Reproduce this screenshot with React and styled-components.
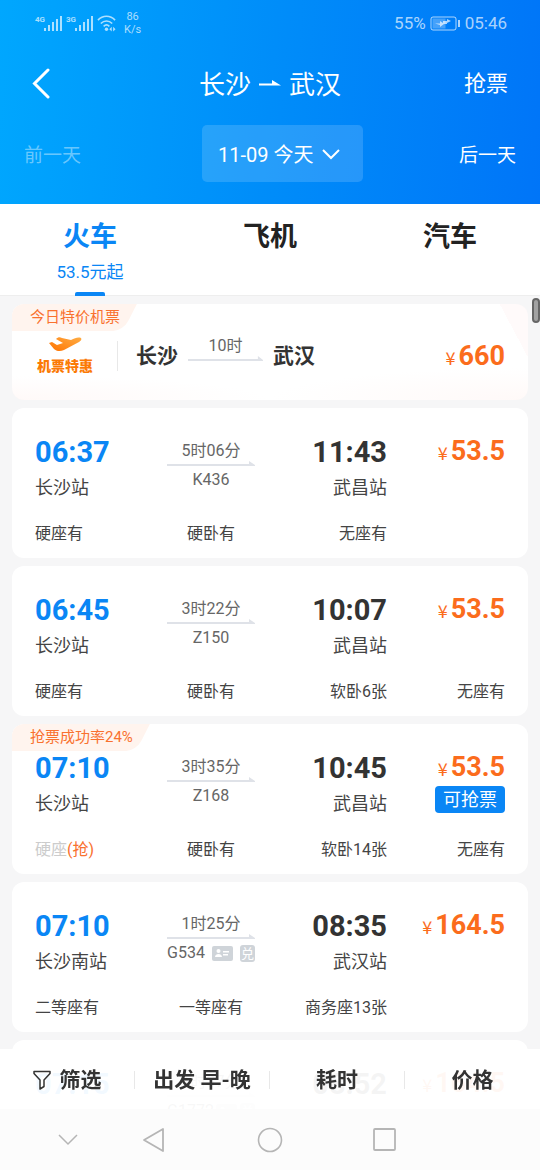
import React, { useState } from "react";
import styled, { createGlobalStyle, css } from "styled-components";

const GlobalStyle = createGlobalStyle`
  * {
    box-sizing: border-box;
  }

  body {
    margin: 0;
    background: #f6f6f7;
    color: #333;
    font-family: Roboto, "Noto Sans CJK SC", sans-serif;
    font-size: 16px;
  }

  button {
    border: 0;
    padding: 0;
    background: none;
    color: inherit;
    font: inherit;
    white-space: nowrap;
    cursor: pointer;
  }
`;

const Page = styled.div`
  height: 100vh;
  display: flex;
  flex-direction: column;
  overflow: hidden;
`;

const Header = styled.header`
  background: linear-gradient(95deg, #00a7fe 0%, #008df9 50%, #0075f8 100%);
  color: #fff;
`;

const StatusBar = styled.div`
  height: 46px;
  padding: 0 33px 0 35px;
  display: flex;
  align-items: center;
  justify-content: space-between;
  color: rgba(255, 255, 255, 0.68);
  font-size: 17px;
`;

const StatusGroup = styled.div`
  display: flex;
  align-items: center;
  gap: 4px;
`;

const Speed = styled.div`
  margin-left: 4px;
  font-size: 11px;
  line-height: 13px;
  text-align: center;
`;

const TitleRow = styled.div`
  height: 74px;
  padding: 0 32px;
  display: grid;
  grid-template-columns: 1fr auto 1fr;
  align-items: center;
`;

const BackButton = styled.button`
  justify-self: start;
  display: flex;
`;

const Title = styled.h1`
  margin: 0;
  padding-top: 3px;
  display: flex;
  align-items: center;
  gap: 8px;
  font-size: 26px;
  font-weight: 400;
  line-height: 36px;
`;

const GrabLink = styled.a`
  justify-self: end;
  padding-top: 2px;
  color: #fff;
  font-size: 22px;
  line-height: 30px;
  text-decoration: none;
`;

const DateRow = styled.div`
  padding: 5px 24px 22px;
  display: grid;
  grid-template-columns: 7fr auto 6fr;
  align-items: center;
`;

const DayButton = styled.button`
  justify-self: ${(props) => (props.$end ? "end" : "start")};
  font-size: 19px;

  &:disabled {
    color: rgba(255, 255, 255, 0.42);
  }
`;

const DateButton = styled.button`
  height: 57px;
  padding: 0 23px 0 16px;
  display: flex;
  align-items: center;
  gap: 9px;
  border-radius: 5px;
  background: rgba(255, 255, 255, 0.15);
  font-size: 20px;
`;

const Tabs = styled.nav`
  flex: none;
  height: 92px;
  display: grid;
  grid-template-columns: repeat(3, 1fr);
  background: #fff;
  border-bottom: 1px solid #eee;
`;

const Tab = styled.button`
  padding-top: 15px;
  display: flex;
  flex-direction: column;
  align-items: center;
  color: #222;

  ${(props) =>
    props.$active &&
    css`
      color: #0a86f5;
    `}
`;

const TabName = styled.span`
  font-size: 27px;
  font-weight: 700;
  line-height: 36px;
`;

const TabPrice = styled.span`
  margin-top: 5px;
  font-size: 17px;
  line-height: 24px;
`;

const TabLine = styled.span`
  width: 30px;
  height: 4px;
  margin-top: 8px;
  border-radius: 2px 2px 0 0;
  background: #0a86f5;
`;

const ListArea = styled.main`
  flex: 1;
  min-height: 0;
  position: relative;
`;

const List = styled.div`
  height: 100%;
  padding: 8px 12px 130px;
  display: flex;
  flex-direction: column;
  gap: 8px;
  overflow-y: auto;
  scrollbar-width: none;
`;

const ScrollThumb = styled.div`
  position: absolute;
  top: 2px;
  right: 0;
  width: 8px;
  height: 25px;
  border: 2px solid #666;
  border-radius: 4px;
  background: #a2a2a2;
`;

const Card = styled.section`
  flex: none;
  position: relative;
  overflow: hidden;
  border-radius: 12px;
  background: #fff;
`;

const Ribbon = styled.div`
  position: absolute;
  top: 0;
  left: 0;
  padding: 0 17px 0 18px;
  color: #f9712f;
  font-size: 15px;
  line-height: 27px;
  z-index: 0;

  &:before {
    content: "";
    position: absolute;
    inset: 0 7px 0 -20px;
    z-index: -1;
    border-radius: 0 0 10px 0;
    background: #fff4ee;
    transform: skewX(-27deg);
  }
`;

const FlightCard = styled(Card)`
  height: 96px;
  padding: 8px 23px 0 25px;
  display: flex;
  align-items: center;
  background:
    linear-gradient(62deg, transparent 95%, #fffafa 95%),
    radial-gradient(ellipse 50% 24px at 0% 100%, #fff9f8, transparent),
    radial-gradient(ellipse 50% 32px at 100% 100%, #fff9f8, transparent),
    #fff;
`;

const FlightLogo = styled.div`
  padding-right: 24px;
  display: flex;
  flex-direction: column;
  align-items: center;
  gap: 3px;
  color: #fb7a05;
  font-size: 14px;
  font-weight: 900;
  line-height: 20px;
`;

const Divider = styled.span`
  width: 1px;
  height: ${(props) => props.$height}px;
  background: #e8e8e8;
`;

const City = styled.strong`
  font-size: 21px;
  font-weight: 700;
  line-height: 30px;
`;

const FlightTime = styled.div`
  width: 75px;
  margin: 0 10px;
  padding-bottom: 15px;
  color: #666;
  font-size: 16px;
  line-height: 20px;
  text-align: center;
`;

const FlightRoute = styled.div`
  flex: 1;
  padding-left: 18px;
  display: flex;
  align-items: center;
`;

const Price = styled.div`
  color: #fb6c1c;
  font-size: 27px;
  font-weight: 700;
  line-height: 34px;
  white-space: nowrap;
`;

const Yen = styled.span`
  margin-right: 3px;
  font-family: "Noto Sans CJK SC", sans-serif;
  font-size: 18px;
  font-weight: 400;
  line-height: 20px;
`;

const TrainCard = styled(Card)`
  height: 150px;
  padding: 26px 23px 12px;
  display: flex;
  flex-direction: column;
  justify-content: space-between;
`;

const Row = styled.div`
  display: grid;
  grid-template-columns: 3fr 2fr 3fr 118px;
`;

const Stop = styled.div`
  text-align: ${(props) => (props.$end ? "right" : "left")};
`;

const Time = styled.div`
  color: ${(props) => (props.$blue ? "#0a86f5" : "#333")};
  font-size: 29px;
  font-weight: 700;
  line-height: 36px;
`;

const Station = styled.div`
  margin-top: 6px;
  color: #444;
  font-size: 18px;
  line-height: 24px;
`;

const Trip = styled.div`
  padding-top: ${(props) => (props.$tight ? 6 : 7)}px;
  color: #666;
  font-size: 16px;
  line-height: 20px;
  text-align: center;
`;

const Line = styled.svg`
  width: 100%;
  height: 6px;
  display: block;
`;

const TrainNumber = styled.div`
  margin-top: 3px;
  display: flex;
  align-items: center;
  justify-content: ${(props) => (props.$spread ? "space-between" : "center")};
`;

const Redeem = styled.span`
  width: 15px;
  border-radius: 3px;
  background: #cfd4d9;
  color: #fff;
  font-size: 13px;
  line-height: 17px;
  text-align: center;
`;

const Fare = styled.div`
  display: flex;
  flex-direction: column;
  align-items: flex-end;
`;

const GrabButton = styled.button`
  margin-top: 2px;
  padding: 0 8px;
  border-radius: 4px;
  background: #0a86f5;
  color: #fff;
  font-size: 18px;
  line-height: 27px;
`;

const Seat = styled.span`
  color: ${(props) => (props.$soldOut ? "#ccc" : "#444")};
  font-size: 16px;
  line-height: 24px;
  text-align: right;
  white-space: nowrap;

  &:nth-child(1) {
    text-align: left;
  }

  &:nth-child(2) {
    text-align: center;
  }
`;

const Grab = styled.span`
  color: #f9712f;
`;

const Footer = styled.footer`
  position: fixed;
  left: 0;
  right: 0;
  bottom: 0;
`;

const SortBar = styled.div`
  height: 60px;
  padding-top: 2px;
  display: grid;
  grid-template-columns: repeat(4, 1fr);
  align-items: center;
  background: rgba(255, 255, 255, 0.95);
`;

const SortItem = styled.button`
  display: flex;
  align-items: center;
  font-size: 21px;
  font-weight: 700;
  line-height: 30px;
`;

const SortLabel = styled.span`
  flex: 1;
  display: flex;
  align-items: center;
  justify-content: center;
  gap: 9px;
`;

const SystemNav = styled.div`
  height: 61px;
  padding: 0 97px 0 39px;
  display: grid;
  grid-template-columns: 1fr 2fr 2fr 2fr;
  place-items: center;
  background: #fcfcfc;
`;

const NavButton = styled.button`
  display: flex;
`;

const trains = [
  {
    depart: "06:37",
    arrive: "11:43",
    from: "长沙站",
    to: "武昌站",
    duration: "5时06分",
    number: "K436",
    price: "53.5",
    seats: ["硬座有", "硬卧有", "无座有"],
  },
  {
    depart: "06:45",
    arrive: "10:07",
    from: "长沙站",
    to: "武昌站",
    duration: "3时22分",
    number: "Z150",
    price: "53.5",
    seats: ["硬座有", "硬卧有", "软卧6张", "无座有"],
  },
  {
    depart: "07:10",
    arrive: "10:45",
    from: "长沙站",
    to: "武昌站",
    duration: "3时35分",
    number: "Z168",
    price: "53.5",
    rate: "抢票成功率24%",
    soldOut: "硬座",
    seats: ["硬座", "硬卧有", "软卧14张", "无座有"],
  },
  {
    depart: "07:10",
    arrive: "08:35",
    from: "长沙南站",
    to: "武汉站",
    duration: "1时25分",
    number: "G534",
    price: "164.5",
    highSpeed: true,
    seats: ["二等座有", "一等座有", "商务座13张"],
  },
  {
    depart: "07:15",
    arrive: "08:52",
    from: "长沙南站",
    to: "武汉站",
    duration: "1时37分",
    number: "G1772",
    price: "164.5",
    highSpeed: true,
    seats: [],
  },
];

function Signal({ label }) {
  return (
    <svg width="27" height="18" viewBox="0 0 27 18" fill="currentColor">
      <text x="0" y="8" fontSize="8" fontWeight="700" fontFamily="Roboto">
        {label}
      </text>
      <path d="M9 14h2v3H9zM13 11h2v6h-2zM17 8h2v9h-2zM21 5h2v12h-2zM25 2h2v15h-2z" />
    </svg>
  );
}

function Wifi() {
  return (
    <svg width="19" height="18" viewBox="0 0 20 18" fill="none" stroke="currentColor" strokeWidth="1.700">
      <path d="M1 6C6 0.500 14 0.500 19 6M4 9.500C7.500 6 12.500 6 16 9.500M7 12.500c2-2 4-2 6 0" />
      <circle cx="10" cy="15.500" r="1.800" fill="currentColor" stroke="none" />
      <path d="M13 15.500l2.500-2.500v5zM19.500 15.500 17 13v5z" fill="currentColor" stroke="none" />
    </svg>
  );
}

function Battery() {
  return (
    <svg width="31" height="15" viewBox="0 0 31 15" fill="none" stroke="currentColor">
      <rect x="1" y="1" width="25" height="13" rx="2" />
      <path d="M29 4v7" strokeWidth="2" />
      <rect x="2.500" y="2.500" width="13" height="10" fill="currentColor" stroke="none" opacity="0.4" />
      <path d="M5 7.500h5V5l3 2V5h4V3l4 2-4 2v1h-3l-4 3V9z" fill="currentColor" stroke="none" />
    </svg>
  );
}

function RouteLine() {
  return (
    <Line viewBox="0 0 88 6" preserveAspectRatio="none" fill="#dfe2e8">
      <path d="M0 3h82V0l6 4v1H0z" />
    </Line>
  );
}

function Money({ value }) {
  return (
    <Price>
      <Yen>¥</Yen>
      {value}
    </Price>
  );
}

function Train({ train }) {
  return (
    <TrainCard>
      {train.rate && <Ribbon>{train.rate}</Ribbon>}
      <Row>
        <Stop>
          <Time $blue>{train.depart}</Time>
          <Station>{train.from}</Station>
        </Stop>
        <Trip $tight={train.highSpeed}>
          {train.duration}
          <RouteLine />
          <TrainNumber $spread={train.highSpeed}>
            {train.number}
            {train.highSpeed && (
              <>
                <svg width="21" height="15" viewBox="0 0 21 15">
                  <rect width="21" height="15" rx="2" fill="#cfd4d9" />
                  <circle cx="6.500" cy="5" r="2" fill="#fff" />
                  <path d="M3 11c0-4 7-4 7 0zM11 5h6v1.500h-6zM11 8h5v1.500h-5z" fill="#fff" />
                </svg>
                <Redeem>兑</Redeem>
              </>
            )}
          </TrainNumber>
        </Trip>
        <Stop $end>
          <Time>{train.arrive}</Time>
          <Station>{train.to}</Station>
        </Stop>
        <Fare>
          <Money value={train.price} />
          {train.rate && <GrabButton>可抢票</GrabButton>}
        </Fare>
      </Row>
      <Row>
        {train.seats.map((seat) => (
          <Seat key={seat} $soldOut={seat === train.soldOut}>
            {seat}
            {seat === train.soldOut && <Grab>(抢)</Grab>}
          </Seat>
        ))}
      </Row>
    </TrainCard>
  );
}

export default function App() {
  const [tab, setTab] = useState("火车");

  return (
    <Page>
      <GlobalStyle />
      <Header>
        <StatusBar>
          <StatusGroup>
            <Signal label="4G" />
            <Signal label="3G" />
            <Wifi />
            <Speed>
              86
              <br />
              K/s
            </Speed>
          </StatusGroup>
          <StatusGroup>
            55%
            <Battery />
            05:46
          </StatusGroup>
        </StatusBar>
        <TitleRow>
          <BackButton aria-label="返回">
            <svg width="20" height="32" viewBox="0 0 20 32" fill="none" stroke="#fff" strokeWidth="3">
              <path d="M16 3 2.500 16.500 16 30" strokeLinecap="round" />
            </svg>
          </BackButton>
          <Title>
            长沙
            <svg width="22" height="12" viewBox="0 0 22 12" fill="#fff">
              <path d="M0 4.500h13V1l9 5.500H0z" />
            </svg>
            武汉
          </Title>
          <GrabLink href="#grab">抢票</GrabLink>
        </TitleRow>
        <DateRow>
          <DayButton disabled>前一天</DayButton>
          <DateButton>
            11-09 今天
            <svg width="18" height="12" viewBox="0 0 18 12" fill="none" stroke="#fff" strokeWidth="2">
              <path d="M1 2l8 8 8-8" />
            </svg>
          </DateButton>
          <DayButton $end>后一天</DayButton>
        </DateRow>
      </Header>
      <Tabs>
        {["火车", "飞机", "汽车"].map((name) => (
          <Tab key={name} $active={name === tab} onClick={() => setTab(name)}>
            <TabName>{name}</TabName>
            {name === "火车" && <TabPrice>53.5元起</TabPrice>}
            {name === tab && <TabLine />}
          </Tab>
        ))}
      </Tabs>
      <ListArea>
        <List>
          <FlightCard>
            <Ribbon>今日特价机票</Ribbon>
            <FlightLogo>
              <svg width="34" height="17" viewBox="0 0 34 17">
                <defs>
                  <linearGradient id="plane" x1="0" y1="1" x2="1" y2="0">
                    <stop offset="0" stopColor="#ff7300" />
                    <stop offset="1" stopColor="#ffad45" />
                  </linearGradient>
                </defs>
                <path
                  d="M1 7l3-1 5 3 6-2-7-4c2-2 4-2 6-1l9 2c4-2 7-3 10-2 1 1 0 3-2 4L16 14c-4 2-8 1-10-1z"
                  fill="url(#plane)"
                />
              </svg>
              机票特惠
            </FlightLogo>
            <Divider $height={30} />
            <FlightRoute>
              <City>长沙</City>
              <FlightTime>
                10时
                <RouteLine />
              </FlightTime>
              <City>武汉</City>
            </FlightRoute>
            <Money value="660" />
          </FlightCard>
          {trains.map((train) => (
            <Train key={train.number} train={train} />
          ))}
        </List>
        <ScrollThumb />
      </ListArea>
      <Footer>
        <SortBar>
          <SortItem>
            <SortLabel>
              <svg width="18" height="20" viewBox="0 0 18 20" fill="none" stroke="#333" strokeWidth="1.500">
                <path d="M1 1.500h16v2L11 10v6.500L7 19v-9L1 3.500z" strokeLinejoin="round" />
              </svg>
              筛选
            </SortLabel>
            <Divider $height={18} />
          </SortItem>
          <SortItem>
            <SortLabel>出发 早-晚</SortLabel>
            <Divider $height={18} />
          </SortItem>
          <SortItem>
            <SortLabel>耗时</SortLabel>
            <Divider $height={18} />
          </SortItem>
          <SortItem>
            <SortLabel>价格</SortLabel>
          </SortItem>
        </SortBar>
        <SystemNav>
          <NavButton aria-label="收起">
            <svg width="20" height="12" viewBox="0 0 20 12" fill="none" stroke="#b5b5b5" strokeWidth="1.500">
              <path d="M1 1l9 9 9-9" />
            </svg>
          </NavButton>
          <NavButton aria-label="后退">
            <svg width="24" height="26" viewBox="0 0 24 26" fill="none" stroke="#b5b5b5" strokeWidth="1.800">
              <path d="M21 2v22L2 13z" strokeLinejoin="round" />
            </svg>
          </NavButton>
          <NavButton aria-label="主页">
            <svg width="26" height="26" viewBox="0 0 26 26" fill="none" stroke="#b5b5b5" strokeWidth="1.600">
              <circle cx="13" cy="13" r="11.500" />
            </svg>
          </NavButton>
          <NavButton aria-label="最近任务">
            <svg width="24" height="24" viewBox="0 0 24 24" fill="none" stroke="#b5b5b5" strokeWidth="1.800">
              <rect x="1" y="1" width="21" height="21" rx="1" />
            </svg>
          </NavButton>
        </SystemNav>
      </Footer>
    </Page>
  );
}
